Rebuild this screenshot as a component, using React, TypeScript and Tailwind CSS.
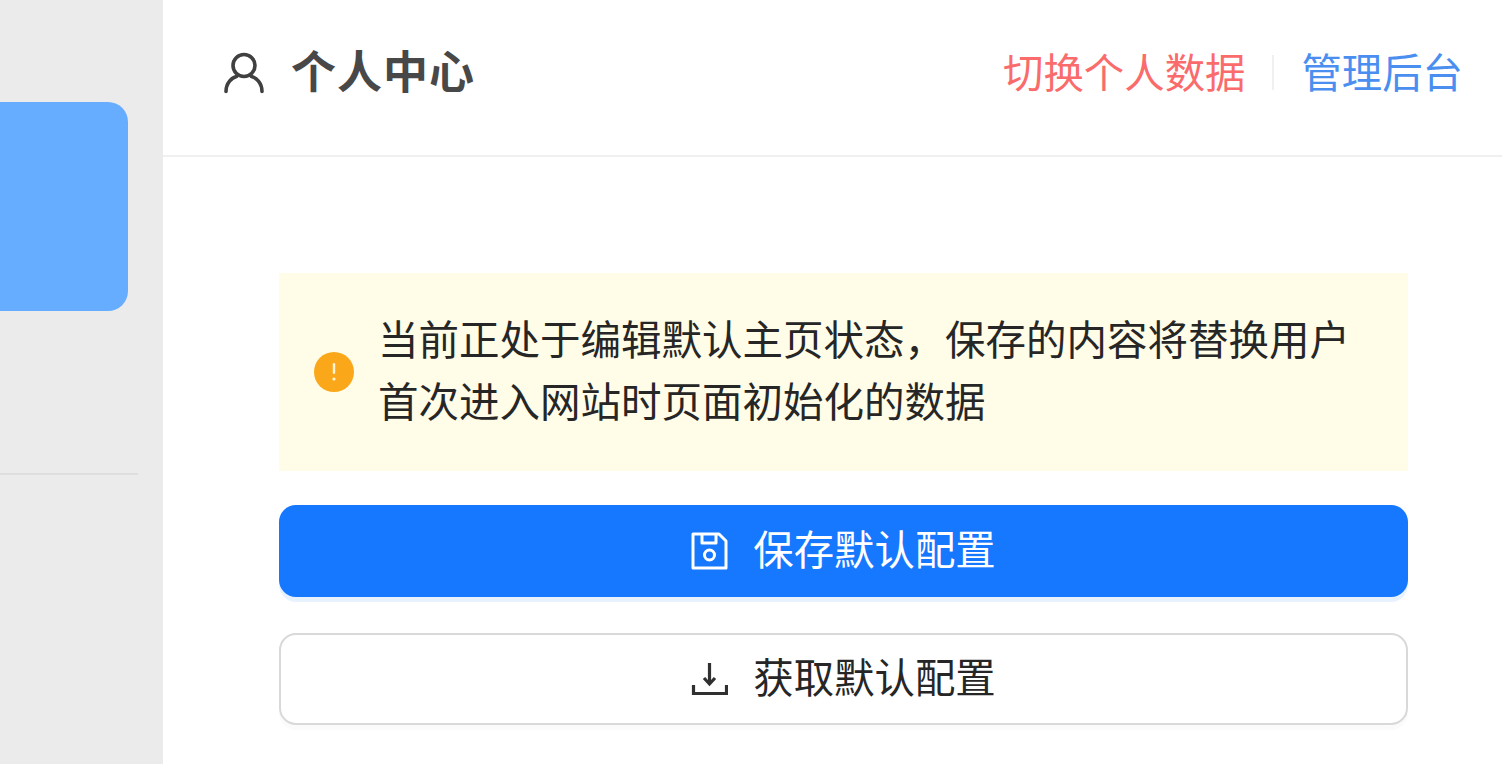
export default function App() {
  return (
    <div
      className="flex h-[764px] w-[1502px] overflow-hidden bg-white"
      style={{ fontFamily: '"Noto Sans CJK SC", "Liberation Sans", sans-serif' }}
    >
      <aside className="flex w-[163px] shrink-0 flex-col bg-[#ebebeb] pt-[102px]">
        <div className="h-[209px] w-[128px] rounded-r-[20px] bg-[#66adff]" />
        <div className="mt-[162px] h-[2px] w-[138px] bg-[#dedede]" />
      </aside>
      <main className="flex min-w-0 flex-1 flex-col">
        <header className="flex h-[157px] shrink-0 items-center justify-between border-b-2 border-[#f0f0f0] pl-[61px] pr-[39px] pb-[10px]">
          <div className="flex items-center gap-[27px]">
            <svg width="40" height="43" viewBox="0 0 40 43" fill="none" stroke="#404040" strokeWidth="3.6" strokeLinecap="round">
              <circle cx="20" cy="14.500" r="11" />
              <path d="M2 40.500c0-8.500 6-14 10.500-15M38 40.500c0-8.500-6-14-10.500-15" />
            </svg>
            <span className="pb-[5px] text-[45px] leading-[60px] font-bold tracking-[1px] text-[#484848]">个人中心</span>
          </div>
          <div className="flex items-center text-[40.400px] leading-[56px]">
            <span className="pb-[4px] text-[#fa6b6b]">切换个人数据</span>
            <span className="mx-[27px] h-[35px] w-[2px] bg-[#f0f0f0]" />
            <span className="pb-[4px] text-[#4a8ff0]">管理后台</span>
          </div>
        </header>
        <section className="flex flex-col pl-[116px] pr-[94px] pt-[116px]">
          <div className="flex h-[198px] items-center gap-[24px] bg-[#fffce8] pl-[35px] pr-[40px]">
            <span className="flex h-[40px] w-[40px] shrink-0 items-center justify-center rounded-full bg-[#faa81a]">
              <svg width="6" height="24" viewBox="0 0 6 24" fill="#fff4d6">
                <rect x="1.800" y="3" width="2.400" height="11" rx="1.200" />
                <circle cx="3" cy="19" r="1.600" />
              </svg>
            </span>
            <p className="pb-[6px] text-[40.500px] leading-[62px] text-[#262626]">
              当前正处于编辑默认主页状态，保存的内容将替换用户首次进入网站时页面初始化的数据
            </p>
          </div>
          <button className="mt-[34px] flex h-[92px] items-center justify-center gap-[25px] rounded-[17px] bg-[#1677ff] text-[40.400px] text-white shadow-[0_5px_0_#e8f2ff]">
            <svg width="37" height="38" viewBox="0 0 37 38" fill="none" stroke="#fff" strokeWidth="3" strokeLinejoin="round">
              <path d="M2 2h26l7 7v27H2z" />
              <path d="M11 2v9h14V2" />
              <circle cx="18.500" cy="23" r="5" />
            </svg>
            <span className="pb-[6px]">保存默认配置</span>
          </button>
          <button className="mt-[36px] flex h-[92px] items-center justify-center gap-[25px] rounded-[17px] border-2 border-[#d9d9d9] bg-white text-[40.400px] text-[#262626] shadow-[0_5px_0_#fbfbfb]">
            <svg width="37" height="36" viewBox="0 0 37 36" fill="none" stroke="#303030" strokeWidth="3.200" strokeLinecap="butt" strokeLinejoin="miter">
              <path d="M18.500 2v20" />
              <path d="M13 17l5.500 6 5.500-6" />
              <path d="M2.500 24v8.500h33V24" />
            </svg>
            <span className="pb-[6px]">获取默认配置</span>
          </button>
        </section>
      </main>
    </div>
  );
}
